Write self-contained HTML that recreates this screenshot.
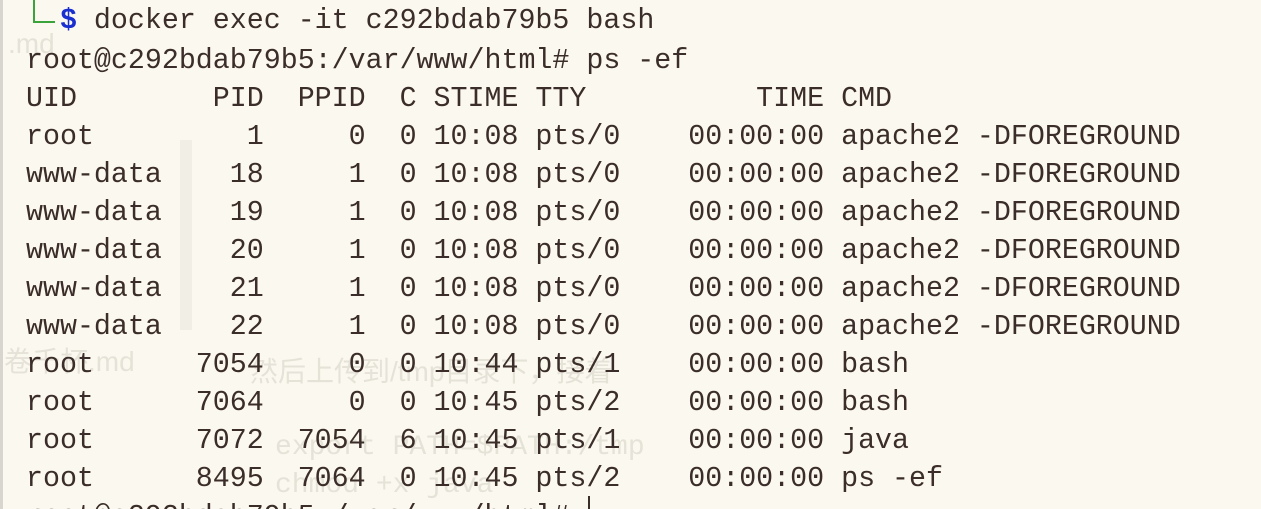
<!DOCTYPE html>
<html><head><meta charset="utf-8"><style>
html,body{margin:0;padding:0;width:1261px;height:509px;overflow:hidden;}
body{background:#fbf8ef;position:relative;font-family:"Liberation Mono",monospace;}
pre{margin:0;position:absolute;left:26px;font-family:"Liberation Mono",monospace;font-size:28.3px;line-height:38px;color:#3b2d29;}
.ghost{position:absolute;font-family:"Liberation Sans","Noto Sans CJK SC",sans-serif;color:rgba(120,110,100,0.16);font-size:28px;}
</style></head><body>
<div style="position:absolute;left:0;top:0;width:3px;height:509px;background:#d8d5cf"></div>
<div style="position:absolute;left:180px;top:140px;width:12px;height:190px;background:rgba(0,0,0,0.04)"></div>
<div class="ghost" style="left:8px;top:28px">.md</div>
<div class="ghost" style="left:4px;top:340px">卷千杯.md</div>
<div class="ghost" style="left:250px;top:350px">然后上传到/tmp目录下，接着</div>
<div class="ghost" style="left:275px;top:432px;font-family:'Liberation Mono',monospace">export PATH=$PATH:/tmp</div>
<div class="ghost" style="left:275px;top:470px;font-family:'Liberation Mono',monospace">chmod +x java</div>
<div style="position:absolute;left:33px;top:0;width:2px;height:22px;background:#3aa43a"></div>
<div style="position:absolute;left:33px;top:21px;width:22px;height:2px;background:#3aa43a"></div>
<pre style="top:2px;left:26px"><span style="color:transparent">  </span><b style="color:#1a2fd0">$</b> docker exec -it c292bdab79b5 bash</pre>
<pre style="top:42px">root@c292bdab79b5:/var/www/html# ps -ef
UID        PID  PPID  C STIME TTY          TIME CMD
root         1     0  0 10:08 pts/0    00:00:00 apache2 -DFOREGROUND
www-data    18     1  0 10:08 pts/0    00:00:00 apache2 -DFOREGROUND
www-data    19     1  0 10:08 pts/0    00:00:00 apache2 -DFOREGROUND
www-data    20     1  0 10:08 pts/0    00:00:00 apache2 -DFOREGROUND
www-data    21     1  0 10:08 pts/0    00:00:00 apache2 -DFOREGROUND
www-data    22     1  0 10:08 pts/0    00:00:00 apache2 -DFOREGROUND
root      7054     0  0 10:44 pts/1    00:00:00 bash
root      7064     0  0 10:45 pts/2    00:00:00 bash
root      7072  7054  6 10:45 pts/1    00:00:00 java
root      8495  7064  0 10:45 pts/2    00:00:00 ps -ef
root@c292bdab79b5:/var/www/html# </pre>
<div style="position:absolute;left:588px;top:496px;width:2px;height:13px;background:#3b2d29"></div>
</body></html>
